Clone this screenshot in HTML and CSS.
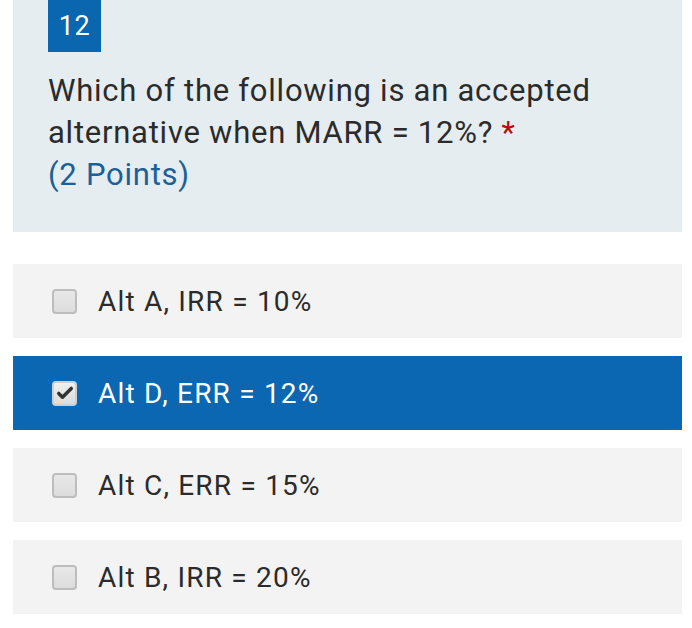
FILE: index.html
```html
<!DOCTYPE html>
<html>
<head>
<meta charset="utf-8">
<link rel="stylesheet" href="styles.css">
</head>
<body>
<div class="page">
  <section class="question">
    <div class="badge">12</div>
    <div class="qtext">Which of the following is an accepted alternative when MARR = 12%? <span class="req">*</span></div>
    <div class="points">(2 Points)</div>
  </section>
  <div class="options">
    <label class="option">
      <span class="box"></span>
      <span class="label">Alt A, IRR = 10%</span>
    </label>
    <label class="option selected">
      <span class="box checked"><svg viewBox="0 0 24 24" width="20" height="20"><path d="M4.5 12.5l4.5 4.5L19.5 6.5" fill="none" stroke="#333" stroke-width="4.2" stroke-linecap="round" stroke-linejoin="round"/></svg></span>
      <span class="label">Alt D, ERR = 12%</span>
    </label>
    <label class="option">
      <span class="box"></span>
      <span class="label">Alt C, ERR = 15%</span>
    </label>
    <label class="option">
      <span class="box"></span>
      <span class="label">Alt B, IRR = 20%</span>
    </label>
  </div>
</div>
</body>
</html>
```
FILE: styles.css
```css
html, body {
  margin: 0;
  padding: 0;
  background: #fff;
}
body {
  font-family: Roboto, "Liberation Sans", sans-serif;
}
.page {
  padding: 0 10px 0 13px;
}
.question {
  background: #e6edf0;
  padding: 0 35px 36px 35px;
}
.badge {
  display: inline-flex;
  align-items: center;
  justify-content: center;
  width: 53px;
  height: 52px;
  background: #0b66b0;
  color: #fff;
  font-size: 27px;
  letter-spacing: 0.5px;
}
.qtext {
  margin-top: 18px;
  font-size: 31px;
  line-height: 42px;
  color: #2b2b2b;
  letter-spacing: 0.75px;
}
.req {
  color: #b01010;
}
.points {
  font-size: 31px;
  line-height: 42px;
  color: #1a609a;
  letter-spacing: 0.75px;
}
.options {
  display: flex;
  flex-direction: column;
  gap: 18px;
  margin-top: 32px;
}
.option {
  display: flex;
  align-items: center;
  height: 74px;
  background: #f3f3f3;
  padding-left: 39px;
  gap: 21px;
}
.option.selected {
  background: #0b67b2;
}
.box {
  width: 25px;
  height: 25px;
  box-sizing: border-box;
  border: 2px solid #bdbdbd;
  border-radius: 4px;
  background: linear-gradient(#e8e8e8, #dcdcdc);
  display: flex;
  align-items: center;
  justify-content: center;
}
.box.checked {
  border-color: #d0d0d0;
  background: linear-gradient(#f0f0f0, #dcdcdc);
}
.label {
  font-size: 28px;
  color: #2b2b2b;
  letter-spacing: 1.2px;
}
.selected .label {
  color: #fff;
}
```
